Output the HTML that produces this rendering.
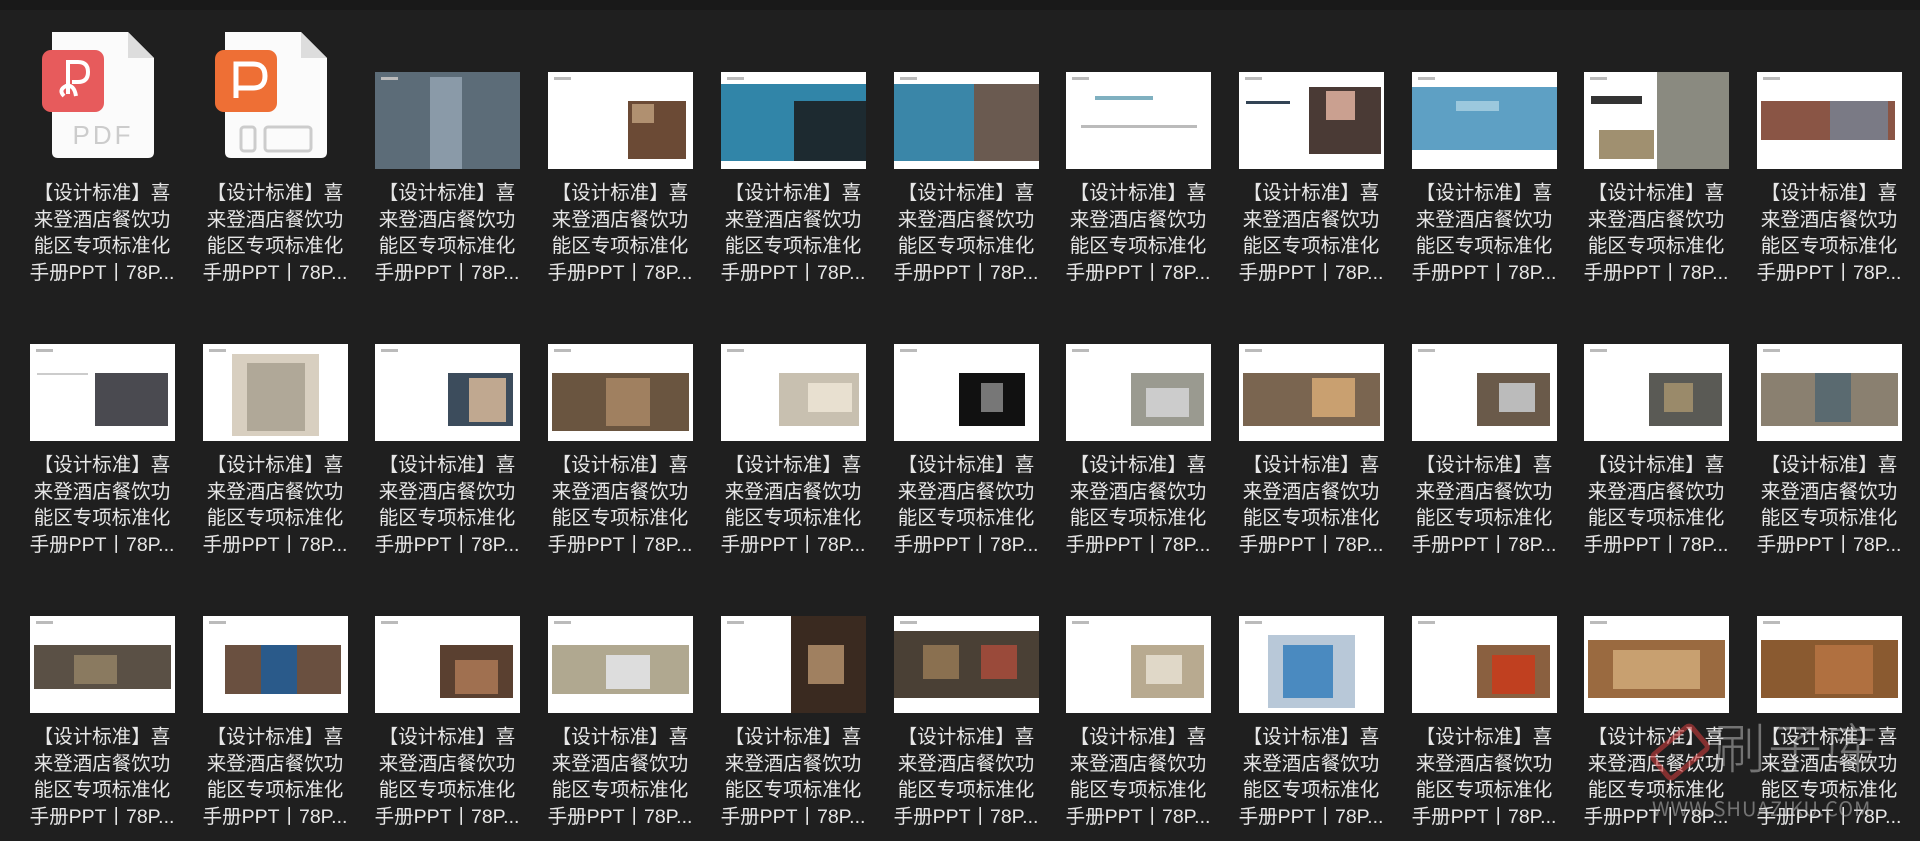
<!DOCTYPE html>
<html><head><meta charset="utf-8"><style>
body{margin:0;width:1920px;height:841px;background:#1f1f1f;overflow:hidden;position:relative;font-family:"Liberation Sans","Noto Sans CJK SC",sans-serif}
.top{position:absolute;left:0;top:0;width:1920px;height:10px;background:#191919}
.cell{position:absolute;width:172px}
.th{position:absolute;left:14px;width:145px;height:97px;background:#fff;overflow:hidden}
.th i{position:absolute;display:block}
.tx{position:absolute;left:0;width:172px;text-align:center;color:#e6e6e6;font-size:19.5px;line-height:26.5px;white-space:nowrap}
.wm{position:absolute;color:rgba(200,200,200,.5);font-family:"Noto Sans CJK SC",sans-serif;white-space:nowrap;line-height:1}
</style></head><body>
<div class="top"></div>
<div id="g"></div>
<div class="wm" style="left:1712px;top:718px;font-size:54px;font-weight:200;letter-spacing:2px">刷子库</div>
<div class="wm" style="left:1652px;top:798px;font-size:20px;letter-spacing:1px">WWW.SHUAZIKU.COM</div>
<svg style="position:absolute;left:1640px;top:712px" width="80" height="80"><g transform="rotate(-40 40 40)" fill="none" stroke="rgba(200,60,60,.6)" stroke-width="5"><rect x="15" y="25" width="50" height="30" rx="4"/></g></svg>
<script>
var T=[
["pdf"],["ppt"],
[["0,0,100,100,#5c6c78"],["38,5,22,95,#8a9aa8"]],
[["55,30,40,60,#6b4a35"],["58,33,15,20,#b09070"]],
[["0,12,100,80,#3185a8"],["50,30,50,62,#1d2a30"]],
[["0,12,100,80,#3a86a8"],["55,12,45,80,#6a5a50"]],
[["20,25,40,4,#7fb0c0"],["10,55,80,3,#bbb"]],
[["5,30,30,3,#345"],["48,15,50,70,#4a3a35"],["60,20,20,30,#caa090"]],
[["0,15,100,65,#5ea0c4"],["30,30,30,10,#9cc8dd"]],
[["5,25,35,8,#333"],["50,0,50,100,#8a8a80"],["10,60,38,30,#a09070"]],
[["3,30,92,40,#8a5545"],["50,30,40,40,#7a7a85"]],
[["45,30,50,55,#4a4a50"],["5,30,35,2,#ccc"]],
[["20,10,60,85,#d8cfc0"],["30,20,40,70,#b0a898"]],
[["50,30,45,55,#3c4c5c"],["65,35,25,45,#c0a890"]],
[["3,30,94,60,#6a5540"],["40,35,30,50,#a08060"]],
[["40,30,55,55,#c8c0b0"],["60,40,30,30,#e8e0d0"]],
[["45,30,45,55,#111"],["60,40,15,30,#777"]],
[["45,30,50,55,#9a9a90"],["55,45,30,30,#ccc"]],
[["3,30,94,55,#7a6550"],["50,35,30,40,#c9a070"]],
[["45,30,50,55,#6a5a4a"],["60,40,25,30,#bbb"]],
[["45,30,50,55,#5a5a55"],["55,40,20,30,#9a8a6a"]],
[["3,30,94,55,#8a8070"],["40,30,25,50,#5a6a70"]],
[["3,30,94,45,#5a5045"],["30,40,30,30,#8a7a60"]],
[["15,30,80,50,#6a5040"],["40,30,25,50,#2a5a8a"]],
[["45,30,50,55,#5a4030"],["55,45,30,35,#a07050"]],
[["3,30,94,50,#b0a890"],["40,40,30,35,#ddd"]],
[["48,0,52,100,#3a2a20"],["60,30,25,40,#a08060"]],
[["0,15,100,70,#4a4035"],["20,30,25,35,#8a7050"],["60,30,25,35,#9a4a3a"]],
[["45,30,50,55,#b8aa90"],["55,40,25,30,#e0d8c8"]],
[["20,20,60,75,#b8c8d8"],["30,30,35,55,#4a8ac0"]],
[["45,30,50,55,#8a6040"],["55,40,30,40,#c04020"]],
[["3,25,94,60,#9a6a40"],["20,35,60,40,#c8a070"]],
[["3,25,94,60,#8a5a30"],["40,30,40,50,#b07040"]]
];
var h='';
for(var k=0;k<33;k++){var r=Math.floor(k/11),c=k%11;var x=Math.round(102+172.7*c-86),y=72+272*r;
h+='<div class="cell" style="left:'+x+'px;top:'+y+'px">';
var t=T[k];
if(t[0]=="pdf"||t[0]=="ppt"){var col=t[0]=="pdf"?"#e75b5c":"#ee6f35";
h+='<svg style="position:absolute;left:22px;top:-48px" width="130" height="145"><path d="M14 8 H90 L116 34 V128 Q116 134 110 134 H20 Q14 134 14 128 Z" fill="#fbfbfb"/><path d="M90 8 V34 H116 Z" fill="#ddd"/><rect x="4" y="26" width="62" height="62" rx="9" fill="'+col+'"/>';
if(t[0]=="pdf")h+='<path d="M26 72 Q20 66 28 62 Q36 60 38 72 M30 70 V38 H40 Q50 38 50 48 Q50 58 40 58 H34" fill="none" stroke="#fff" stroke-width="4"/><text x="65" y="120" text-anchor="middle" font-family="Liberation Sans" font-size="26" fill="#ccc" letter-spacing="3">PDF</text>';
else h+='<path d="M25 74 V40 H42 Q54 40 54 52 Q54 64 42 64 H25" fill="none" stroke="#fff" stroke-width="5"/><rect x="30" y="103" width="14" height="24" rx="3" fill="none" stroke="#ccc" stroke-width="3"/><rect x="54" y="103" width="46" height="24" rx="3" fill="none" stroke="#ccc" stroke-width="3"/>';
h+='</svg>';}
else{h+='<div class="th">';for(var j=0;j<t.length;j++){var p=t[j][0].split(',');h+='<i style="left:'+p[0]+'%;top:'+p[1]+'%;width:'+p[2]+'%;height:'+p[3]+'%;background:'+p[4]+'"></i>';}
h+='<i style="left:4%;top:5%;width:12%;height:3%;background:#bbb"></i></div>';}
h+='<div class="tx" style="top:108px">【设计标准】喜<br>来登酒店餐饮功<br>能区专项标准化<br>手册PPT丨78P...</div></div>';}
document.getElementById('g').innerHTML=h;
</script>
</body></html>
